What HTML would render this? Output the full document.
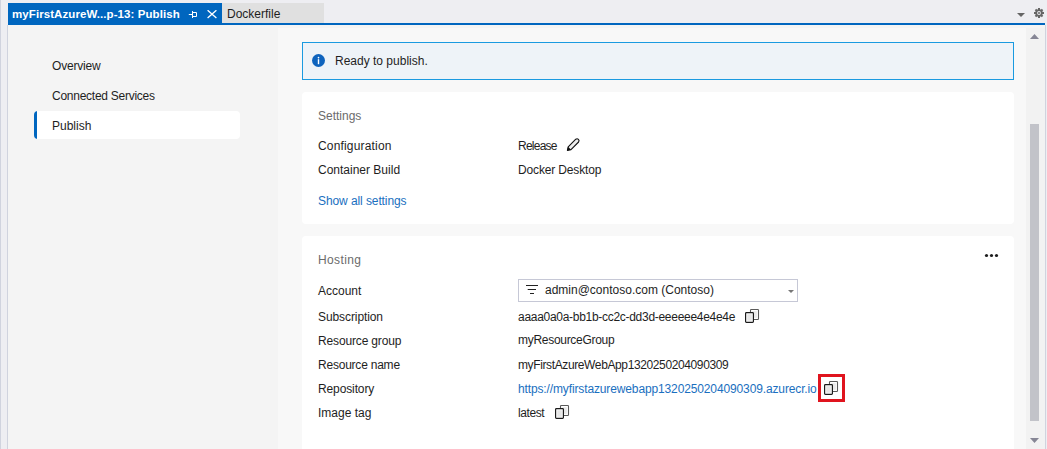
<!DOCTYPE html>
<html><head><meta charset="utf-8">
<style>
*{box-sizing:border-box;margin:0;padding:0}
html,body{width:1047px;height:449px;overflow:hidden;background:#eeeef2;font-family:"Liberation Sans",sans-serif;font-size:12px;color:#1e1e1e}
.abs{position:absolute}
.vline{position:absolute;top:0;width:1px;height:449px;background:#d0d3de}
#tab1{left:8px;top:3px;width:214px;height:22px;background:#0066bf;color:#fff;font-weight:bold;font-size:11.5px}
#tab1 .t{position:absolute;left:4px;top:5px;white-space:nowrap}
#tab2{left:222px;top:3px;width:102px;height:20px;background:#e0e0e0;color:#1e1e1e}
#tab2 .t{position:absolute;left:5px;top:4px;white-space:nowrap}
#bline{left:8px;top:23px;width:1037px;height:2px;background:#0066bf}
#doc{left:8px;top:25px;width:1037px;height:424px;background:#f4f4f4}
#content{left:278px;top:28px;width:767px;height:421px;background:#f8f8f8}
#track{left:1026px;top:28px;width:19px;height:421px;background:#f2f2f2}
.nav{position:absolute;left:52px;white-space:nowrap}
#sel{left:34px;top:111px;width:206px;height:28px;background:#fff;border-radius:4px;overflow:hidden}
#sel:before{content:"";position:absolute;left:0;top:0;width:3px;height:28px;background:#0066bf}
#banner{left:302px;top:42px;width:712px;height:38px;background:#eef3f8;border:1px solid #1a9ae0}
.card{position:absolute;left:302px;width:712px;background:#fff;border-radius:4px}
.txt{position:absolute;white-space:nowrap}
.gray{color:#6b6b6b}
.link{color:#1a6fc0}
</style></head><body>
<div class="vline" style="left:0"></div>


<div id="tab1" class="abs"><span class="t" style="letter-spacing:0.08px">myFirstAzureW...p-13: Publish</span>
<svg class="abs" style="left:180px;top:7px" width="11" height="9" viewBox="0 0 11 9">
<path d="M0.8 4.5H4.5M4.5 1V8M4.5 2.5H8.5V6.5H4.5" stroke="#fff" stroke-width="1" fill="none"/></svg>
<svg class="abs" style="left:199px;top:7px" width="10" height="9" viewBox="0 0 10 9">
<path d="M0.6 0.2L9.4 8M9.4 0.2L0.6 8" stroke="#fff" stroke-width="1.3" fill="none"/></svg>
</div>
<div id="tab2" class="abs"><span class="t">Dockerfile</span></div>

<svg class="abs" style="left:1017px;top:13px" width="8" height="5" viewBox="0 0 8 5"><path d="M0 0H8L4 4Z" fill="#656565"/></svg>
<svg class="abs" style="left:1033px;top:7px" width="12" height="12" viewBox="0 0 12 12">
<g fill="#666"><circle cx="6" cy="6" r="3.7"/>
<rect x="5" y="1" width="2" height="10"/><rect x="1" y="5" width="10" height="2"/>
<rect x="5" y="1" width="2" height="10" transform="rotate(45 6 6)"/><rect x="5" y="1" width="2" height="10" transform="rotate(-45 6 6)"/></g>
<circle cx="6" cy="6" r="1.9" fill="#eeeef2"/><circle cx="6" cy="6" r="1" fill="#666"/></svg>

<div id="bline" class="abs"></div>
<div id="doc" class="abs"></div>
<div id="content" class="abs"></div>
<div id="track" class="abs"></div>
<div class="vline" style="left:7px;top:25px;height:424px"></div>
<div class="vline" style="left:1045px;top:25px;height:424px"></div>
<svg class="abs" style="left:1030px;top:34px" width="9" height="6"><path d="M0 5H9L4.5 0Z" fill="#868695"/></svg>
<div class="abs" style="left:1030px;top:124px;width:9px;height:297px;background:#c2c3c9"></div>
<svg class="abs" style="left:1030px;top:438px" width="9" height="6"><path d="M0 0H9L4.5 5Z" fill="#868695"/></svg>

<span class="nav" style="letter-spacing:-0.19px;top:59px">Overview</span>
<span class="nav" style="letter-spacing:-0.26px;top:89px">Connected Services</span>
<div id="sel" class="abs"></div>
<span class="nav" style="top:119px">Publish</span>

<div id="banner" class="abs">
<svg class="abs" style="left:9px;top:11px" width="14" height="14" viewBox="0 0 14 14"><circle cx="6.5" cy="6.5" r="6.5" fill="#0e63bd"/><rect x="5.8" y="5.2" width="1.4" height="5" fill="#fff"/><circle cx="6.5" cy="3.6" r="0.85" fill="#fff"/></svg>
<span class="txt" style="left:32px;top:11px">Ready to publish.</span>
</div>

<div class="card" style="top:92px;height:132px">
<span class="txt gray" style="left:16px;top:17px">Settings</span>
<span class="txt" style="letter-spacing:0.17px;left:16px;top:47px">Configuration</span>
<span class="txt" style="letter-spacing:-0.75px;left:216px;top:47px">Release</span>
<svg class="abs" style="left:260px;top:42px" width="24" height="22" viewBox="0 0 24 22"><path d="M5.4 16.4L6.2 12.8L13.8 5.2A2 2 0 0 1 16.6 8L9 15.6Z" fill="#eee" stroke="#111" stroke-width="1.1" stroke-linejoin="round"/><path d="M5.2 16.6L6 12.7L9.1 15.8Z" fill="#111"/></svg>
<span class="txt" style="left:16px;top:71px">Container Build</span>
<span class="txt" style="letter-spacing:-0.15px;left:216px;top:71px">Docker Desktop</span>
<span class="txt link" style="letter-spacing:-0.09px;left:16px;top:102px">Show all settings</span>
</div>

<div class="card" style="top:236px;height:230px">
<span class="txt gray" style="letter-spacing:0.37px;left:16px;top:17px">Hosting</span>
<svg class="abs" style="left:684px;top:18px;overflow:visible" width="15" height="5"><circle cx="0.5" cy="1.5" r="1.6" fill="#1e1e1e"/><circle cx="5.5" cy="1.5" r="1.6" fill="#1e1e1e"/><circle cx="10.5" cy="1.5" r="1.6" fill="#1e1e1e"/></svg>
<span class="txt" style="left:16px;top:48px">Account</span>
<div class="abs" style="left:216px;top:43px;width:280px;height:23px;border:1px solid #c6c8d6;background:#fff">
<svg class="abs" style="left:7px;top:4px" width="13" height="11"><path d="M0 1.5H12M1.7 5.5H10M4 9.5H8" stroke="#222" stroke-width="1"/></svg>
<span class="txt" style="left:26px;top:3px">admin@contoso.com (Contoso)</span>
<svg class="abs" style="left:269px;top:10px" width="6" height="4"><path d="M0 0H6L3 3Z" fill="#777"/></svg>
</div>
<span class="txt" style="letter-spacing:-0.09px;left:16px;top:74px">Subscription</span>
<span class="txt" style="letter-spacing:-0.29px;left:216px;top:74px">aaaa0a0a-bb1b-cc2c-dd3d-eeeeee4e4e4e</span>
<span class="txt" style="letter-spacing:-0.15px;left:16px;top:98px">Resource group</span>
<span class="txt" style="letter-spacing:-0.29px;left:216px;top:97px">myResourceGroup</span>
<span class="txt" style="letter-spacing:-0.22px;left:16px;top:122px">Resource name</span>
<span class="txt" style="letter-spacing:-0.38px;left:216px;top:122px">myFirstAzureWebApp1320250204090309</span>
<span class="txt" style="letter-spacing:-0.12px;left:16px;top:146px">Repository</span>
<span class="txt link" style="letter-spacing:-0.13px;left:216px;top:146px">https://myfirstazurewebapp1320250204090309.azurecr.io</span>
<span class="txt" style="left:16px;top:170px">Image tag</span>
<span class="txt" style="letter-spacing:-0.4px;left:216px;top:170px">latest</span>
<svg class="abs" style="left:443px;top:73px" width="15" height="15" viewBox="0 0 15 15"><rect x="5.5" y="0.5" width="8" height="10" rx="0.8" fill="#fff" stroke="#5a5a5a" stroke-width="1.1"/><rect x="7.2" y="2.2" width="4.6" height="6.6" fill="#e9e9e9"/><rect x="0.6" y="3.6" width="7.8" height="9.8" rx="0.8" fill="#fff" stroke="#1a1a1a" stroke-width="1.2"/><rect x="2.2" y="5.2" width="4.6" height="6.6" fill="#e6e6e6"/></svg><svg class="abs" style="left:253px;top:169px" width="15" height="15" viewBox="0 0 15 15"><rect x="5.5" y="0.5" width="8" height="10" rx="0.8" fill="#fff" stroke="#5a5a5a" stroke-width="1.1"/><rect x="7.2" y="2.2" width="4.6" height="6.6" fill="#e9e9e9"/><rect x="0.6" y="3.6" width="7.8" height="9.8" rx="0.8" fill="#fff" stroke="#1a1a1a" stroke-width="1.2"/><rect x="2.2" y="5.2" width="4.6" height="6.6" fill="#e6e6e6"/></svg><svg class="abs" style="left:522px;top:145px" width="15" height="15" viewBox="0 0 15 15"><rect x="5.5" y="0.5" width="8" height="10" rx="0.8" fill="#fff" stroke="#5a5a5a" stroke-width="1.1"/><rect x="7.2" y="2.2" width="4.6" height="6.6" fill="#e9e9e9"/><rect x="0.6" y="3.6" width="7.8" height="9.8" rx="0.8" fill="#fff" stroke="#1a1a1a" stroke-width="1.2"/><rect x="2.2" y="5.2" width="4.6" height="6.6" fill="#e6e6e6"/></svg><div class="abs" style="left:516px;top:138px;width:27px;height:28px;border:3px solid #e0141e"></div>
</div>
</body></html>
